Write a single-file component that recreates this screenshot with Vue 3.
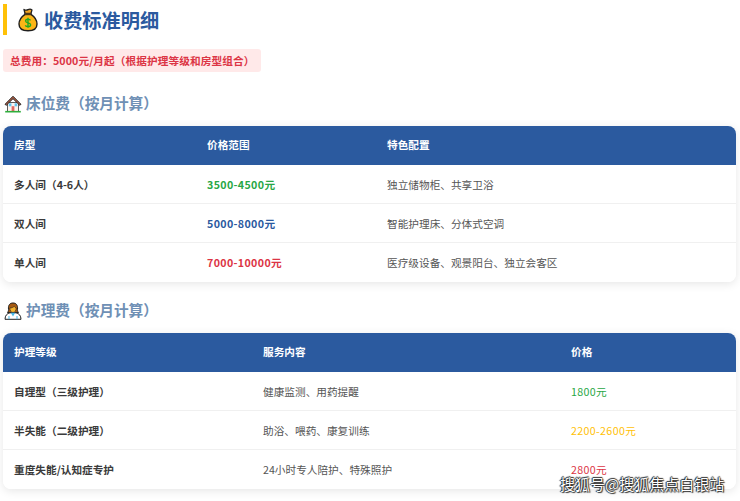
<script setup>
const L = '\uFF08'
const R = '\uFF09'
const tables = [
  {
    cols: [193, 180, 360],
    head: ['房型', '价格范围', '特色配置'],
    strong: true,
    rows: [
      [`多人间${L}4-6人${R}`, '3500-4500元', '独立储物柜、共享卫浴', 'green'],
      ['双人间', '5000-8000元', '智能护理床、分体式空调', 'blue'],
      ['单人间', '7000-10000元', '医疗级设备、观景阳台、独立会客区', 'red'],
    ],
  },
  {
    cols: [249, 308, 176],
    head: ['护理等级', '服务内容', '价格'],
    strong: false,
    rows: [
      [`自理型${L}三级护理${R}`, '健康监测、用药提醒', '1800元', 'green'],
      [`半失能${L}二级护理${R}`, '助浴、喂药、康复训练', '2200-2600元', 'yellow'],
      ['重度失能/认知症专护', '24小时专人陪护、特殊照护', '2800元', 'red'],
    ],
  },
]
const total = `总费用\uFF1A5000元/月起${L}根据护理等级和房型组合${R}`
const sectionTitle = (i) => `${i === 0 ? '床位费' : '护理费'}${L}按月计算${R}`
</script>

<template>
  <main class="page">
    <h1 class="title">
      <svg class="bag" viewBox="0 0 20 24" aria-hidden="true">
        <path d="M6 1.500c1.500.9 2.600.9 4 .2 1.400-.7 2.800-.7 4 .2L12.800 6H7.200z" fill="#f5a623" stroke="#1f1f1f" stroke-width="1.300" stroke-linejoin="round"/>
        <path d="M7 6.300h6c3.700 2.500 6 6 6 9.700 0 4.500-3.500 6.800-9 6.800S1 20.500 1 16c0-3.700 2.300-7.200 6-9.700z" fill="#fbb516" stroke="#1f1f1f" stroke-width="1.400"/>
        <rect x="6.600" y="5.200" width="6.800" height="1.600" rx=".8" fill="#8a5a12" stroke="#1f1f1f" stroke-width=".6"/>
        <path d="M12.500 12.300c-.5-.9-1.400-1.200-2.500-1.200-1.400 0-2.400.7-2.400 1.900 0 2.500 5 1.300 5 3.700 0 1.200-1.100 1.900-2.600 1.900-1.200 0-2.200-.4-2.700-1.300M10 9.700v10.100" fill="none" stroke="#22a822" stroke-width="1.400"/>
      </svg>
      <span>收费标准明细</span>
    </h1>

    <p class="total">{{ total }}</p>

    <template v-for="(table, i) in tables" :key="i">
      <h2 class="section">
        <svg v-if="i === 0" class="ico" viewBox="0 0 18 18" aria-hidden="true">
          <path d="M3.500 7.500h11v9h-11z" fill="#fdf3ee" stroke="#333" stroke-width=".8"/>
          <path d="M1 9.300 9 1.200l8 8.100-1.300 1L9 3.700l-6.700 6.600z" fill="#a9583f" stroke="#222" stroke-width=".9" stroke-linejoin="round"/>
          <path d="M7.600 11.200h2.800v5.300H7.600z" fill="#e0675f"/>
          <rect x="4.800" y="8.300" width="2.600" height="3" fill="#62c5f0"/>
          <rect x="10.600" y="8.300" width="2.600" height="3" fill="#62c5f0"/>
          <path d="M1.200 16.700h15.600" stroke="#2fae3c" stroke-width="1.600"/>
        </svg>
        <svg v-else class="ico" viewBox="0 0 18 18" aria-hidden="true">
          <path d="M4.500 7.500C4 2.800 6 1 9 1s5 1.800 4.500 6.500c0 1.500.4 2.300 1 3H3.500c.6-.7 1-1.500 1-3z" fill="#a65a12" stroke="#222" stroke-width="1"/>
          <path d="M5.800 6c1.800 0 3.500-.6 4.400-1.800.6 1 1.300 1.600 2 1.800 0 2.600-1.300 4.500-3.200 4.500S5.800 8.600 5.800 6z" fill="#f5b32f" stroke="#222" stroke-width=".6"/>
          <path d="M1 17.300c0-3.800 2.200-6 5-6.500h6c2.800.5 5 2.700 5 6.500z" fill="#fff" stroke="#222" stroke-width="1"/>
          <path d="M6.800 10.800h4.400L9 14.500z" fill="#48b9e8"/>
          <path d="M5 14v3.200M13 14v3.200" stroke="#48b9e8" stroke-width="1"/>
        </svg>
        <span>{{ sectionTitle(i) }}</span>
      </h2>

      <table class="fees">
        <colgroup>
          <col v-for="(w, c) in table.cols" :key="c" :style="{ width: w + 'px' }" />
        </colgroup>
        <thead>
          <tr>
            <th v-for="h in table.head" :key="h">{{ h }}</th>
          </tr>
        </thead>
        <tbody>
          <tr v-for="row in table.rows" :key="row[0]">
            <td class="name">{{ row[0] }}</td>
            <template v-if="table.strong">
              <td class="price strong" :class="row[3]">{{ row[1] }}</td>
              <td>{{ row[2] }}</td>
            </template>
            <template v-else>
              <td>{{ row[1] }}</td>
              <td class="price" :class="row[3]">{{ row[2] }}</td>
            </template>
          </tr>
        </tbody>
      </table>
    </template>

    <div class="mark">搜狐号@搜狐焦点白银站</div>
  </main>
</template>

<style>
html, body { background: #fff; overflow: hidden; }
</style>

<style scoped>
.page {
  position: relative;
  box-sizing: border-box;
  width: 740px;
  height: 501px;
  padding: 4px 4px 0 3px;
  font-family: "Noto Sans CJK SC", "Noto Sans", sans-serif;
  font-size: 10.67px;
  color: #555;
  overflow: hidden;
}
.title {
  display: flex;
  align-items: center;
  gap: 6px;
  box-sizing: border-box;
  height: 31px;
  margin: 0;
  padding-left: 11px;
  border-left: 4px solid #ffc107;
  font-size: 19.2px;
  font-weight: 700;
  color: #2b5a9f;
}
.bag { width: 20px; height: 24px; flex: none; }
.total {
  width: fit-content;
  box-sizing: border-box;
  height: 23px;
  margin: 14px 0 0;
  padding: 0 7px;
  border-radius: 3px;
  background: #ffe9e9;
  color: #dc3545;
  font-weight: 700;
  line-height: 23px;
  letter-spacing: 0.08px;
}
.section {
  display: flex;
  align-items: center;
  gap: 4px;
  height: 22px;
  margin: 21px 0 11px 1px;
  font-size: 14.67px;
  font-weight: 700;
  color: #6f90b5;
}
.section span { position: relative; top: -2px; }
.fees + .section { margin-top: 18px; }
.ico { width: 18px; height: 18px; flex: none; }
.fees {
  width: 733px;
  table-layout: fixed;
  border-collapse: separate;
  border-spacing: 0;
  border-radius: 8px;
  box-shadow: 0 2px 10px rgba(0, 0, 0, 0.1);
}
th, td {
  box-sizing: border-box;
  height: 39px;
  padding: 0 11px;
  text-align: left;
  line-height: 1;
}
th {
  background: #2b5a9f;
  color: #fff;
  font-weight: 700;
}
th:first-child { border-top-left-radius: 8px; }
th:last-child { border-top-right-radius: 8px; }
td {
  background: #fff;
  padding-top: 2px;
  border-bottom: 1px solid #f0f0f0;
}
tr:last-child td { border-bottom-color: transparent; }
tr:last-child td:first-child { border-bottom-left-radius: 8px; }
tr:last-child td:last-child { border-bottom-right-radius: 8px; }
.name { font-weight: 700; color: #3a3a3a; }
.strong { font-weight: 700; }
.price { letter-spacing: 0.35px; }
td.green { color: #28a745; }
td.blue { color: #2b5a9f; }
td.red { color: #dc3545; }
td.yellow { color: #ffc107; }
.mark {
  position: absolute;
  left: 560px;
  top: 473px;
  color: #fff;
  font-size: 15px;
  line-height: 21px;
  white-space: nowrap;
  text-shadow: 0 0 1px #000, 1px 1px 1px #333, -1px 0 1px #333, 0 -1px 1px #333;
}
</style>
